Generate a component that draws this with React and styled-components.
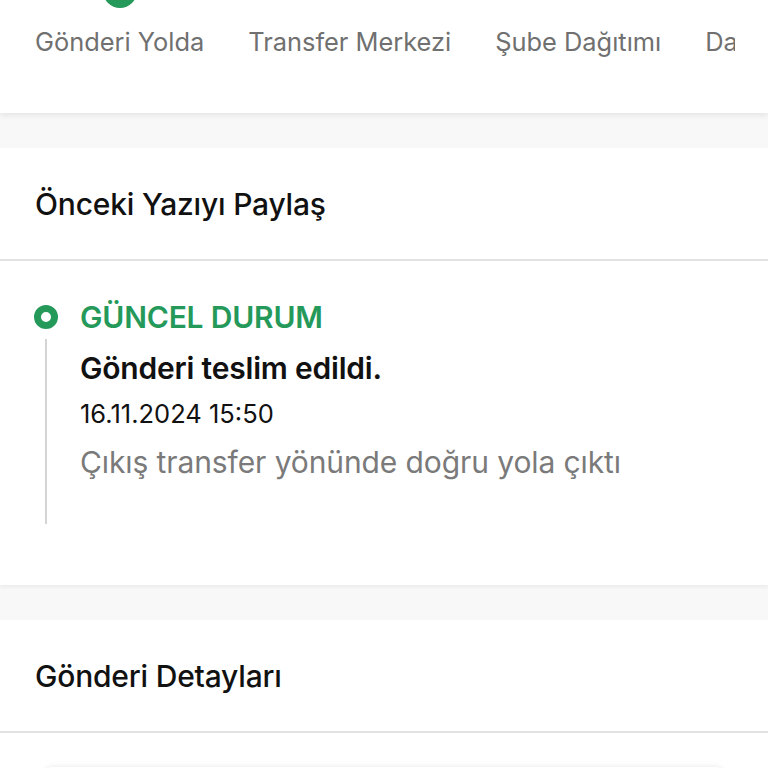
import styled, { createGlobalStyle } from "styled-components";

const GlobalStyle = createGlobalStyle`
  html, body {
    margin: 0;
    padding: 0;
    background: #f8f8f8;
    font-family: Inter, "Noto Sans", sans-serif;
  }
  #root {
    overflow: hidden;
    height: 768px;
  }
`;

const colors = {
  green: "#24995a",
  text: "#111111",
  gray: "#707070",
  line: "#e2e2e2",
};

const steps = [
  { title: "Gönderi Yolda", active: true },
  { title: "Transfer Merkezi" },
  { title: "Şube Dağıtımı" },
  { title: "Dağıtımda" },
  { title: "Teslim Edildi" },
];

const Page = styled.div`
  display: flex;
  flex-direction: column;
  gap: 35px;
  margin-top: -26px;
`;

const Card = styled.section`
  background: #fff;
  box-shadow: 0 2px 4px rgba(0, 0, 0, 0.06);
`;

const StepperCard = styled(Card)`
  padding-bottom: 55px;
  box-shadow: 0 3px 5px rgba(0, 0, 0, 0.07);
`;

const StepsClip = styled.div`
  margin: 0 33px 0 35px;
  overflow: hidden;
`;

const StepsRow = styled.div`
  display: flex;
  gap: 44px;
  white-space: nowrap;
`;

const Step = styled.div`
  display: flex;
  flex-direction: column;
  align-items: center;
  gap: 18px;
  flex-shrink: 0;
`;

const StepDot = styled.span`
  width: 34px;
  height: 34px;
  display: flex;
  align-items: center;
  justify-content: center;

  &::before {
    content: "";
    width: ${(p) => (p.$active ? "34px" : "16px")};
    height: ${(p) => (p.$active ? "34px" : "16px")};
    border-radius: 50%;
    background: ${(p) => (p.$active ? colors.green : "#d6d6d6")};
  }
`;

const StepLabel = styled.span`
  font-size: 25.4px;
  line-height: 32px;
  color: ${colors.gray};
`;

const CardHeader = styled.div`
  height: 111px;
  display: flex;
  align-items: center;
  padding: 0 35px;
  border-bottom: 2px solid ${colors.line};
`;

const CardTitle = styled.h2`
  margin: 0;
  font-size: 30px;
  font-weight: 500;
  color: ${colors.text};
  letter-spacing: -0.2px;
`;

const TimelineBody = styled.div`
  padding: 37px 35px 61px 34px;
`;

const TimelineItem = styled.div`
  display: grid;
  grid-template-columns: 24px 1fr;
  column-gap: 22px;
`;

const Rail = styled.div`
  display: flex;
  flex-direction: column;
  align-items: center;
  gap: 10px;
`;

const Ring = styled.span`
  width: 24px;
  height: 24px;
  margin-top: 7px;
  box-sizing: border-box;
  border-radius: 50%;
  border: 7px solid ${colors.green};
  flex-shrink: 0;
`;

const RailLine = styled.span`
  flex: 1;
  width: 2px;
  background: #d4d4d4;
`;

const ItemContent = styled.div`
  display: flex;
  flex-direction: column;
  padding-bottom: 43px;
`;

const Status = styled.div`
  font-size: 30px;
  line-height: 38px;
  font-weight: 600;
  color: ${colors.green};
  letter-spacing: -0.2px;
`;

const Headline = styled.div`
  margin-top: 13px;
  font-size: 30px;
  line-height: 38px;
  font-weight: 600;
  color: ${colors.text};
  letter-spacing: -0.2px;
`;

const DateText = styled.div`
  margin-top: 12px;
  font-size: 25.5px;
  line-height: 30px;
  color: ${colors.text};
`;

const Note = styled.div`
  margin-top: 14px;
  font-size: 30px;
  line-height: 38px;
  color: #7a7a7a;
  letter-spacing: -0.1px;
`;

const DetailsBody = styled.div`
  padding: 34px 46px 40px 46px;
`;

const DetailsBox = styled.div`
  height: 120px;
  background: #fff;
  border-radius: 6px;
  box-shadow: 0 0 6px rgba(0, 0, 0, 0.1);
`;

export default function App() {
  return (
    <>
      <GlobalStyle />
      <Page>
        <StepperCard>
          <StepsClip>
            <StepsRow>
              {steps.map((s) => (
                <Step key={s.title}>
                  <StepDot $active={s.active} />
                  <StepLabel>{s.title}</StepLabel>
                </Step>
              ))}
            </StepsRow>
          </StepsClip>
        </StepperCard>

        <Card>
          <CardHeader>
            <CardTitle>Önceki Yazıyı Paylaş</CardTitle>
          </CardHeader>
          <TimelineBody>
            <TimelineItem>
              <Rail>
                <Ring />
                <RailLine />
              </Rail>
              <ItemContent>
                <Status>GÜNCEL DURUM</Status>
                <Headline>Gönderi teslim edildi.</Headline>
                <DateText>16.11.2024 15:50</DateText>
                <Note>Çıkış transfer yönünde doğru yola çıktı</Note>
              </ItemContent>
            </TimelineItem>
          </TimelineBody>
        </Card>

        <Card>
          <CardHeader>
            <CardTitle>Gönderi Detayları</CardTitle>
          </CardHeader>
          <DetailsBody>
            <DetailsBox />
          </DetailsBody>
        </Card>
      </Page>
    </>
  );
}
